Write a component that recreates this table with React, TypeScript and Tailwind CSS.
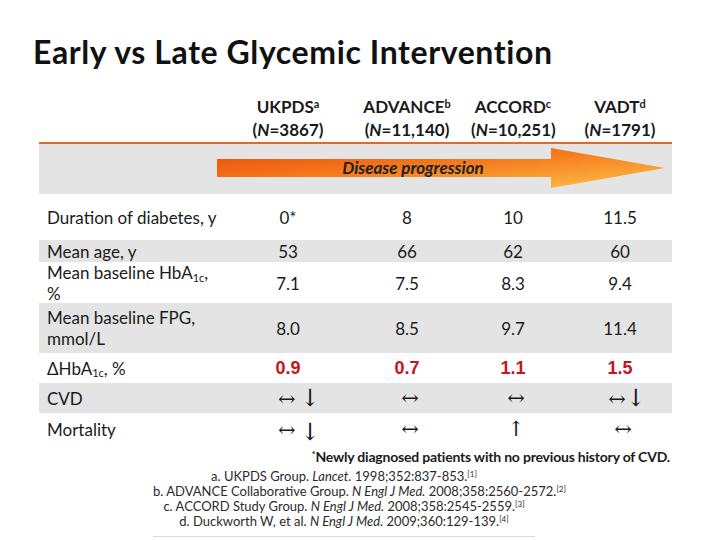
import React from "react";

const cols = "grid grid-cols-[194px_110px_128px_84px_117px] items-center";

type Row = {
  label: React.ReactNode;
  values: React.ReactNode[];
  h: string;
  gray?: boolean;
};

const arrowCls = "font-['DejaVu_Serif',serif] text-[21px] leading-none";
const downCls = "font-['DejaVu_Serif',serif] text-[24px] leading-none";

const rows: Row[] = [
  { label: "Duration of diabetes, y", values: ["0*", "8", "10", "11.5"], h: "h-[46px]" },
  { label: "Mean age, y", values: ["53", "66", "62", "60"], h: "h-[22px]", gray: true },
  {
    label: (
      <>
        Mean baseline HbA<sub className="text-[11px] leading-none">1c</sub>,
        <br />%
      </>
    ),
    values: ["7.1", "7.5", "8.3", "9.4"],
    h: "h-[41px]",
  },
  {
    label: (
      <>
        Mean baseline FPG,
        <br />
        mmol/L
      </>
    ),
    values: ["8.0", "8.5", "9.7", "11.4"],
    h: "h-[50px]",
    gray: true,
  },
  {
    label: (
      <>
        ΔHbA<sub className="text-[11px] leading-none">1c</sub>, %
      </>
    ),
    values: ["0.9", "0.7", "1.1", "1.5"].map((v) => (
      <span key={v} className="font-['Liberation_Sans',sans-serif] text-[18px] font-bold text-[#c8141c]">
        {v}
      </span>
    )),
    h: "h-[30px]",
  },
  {
    label: "CVD",
    values: [
      <span key="a" className="pl-[22px]"><span className={arrowCls}>↔</span> <span className={downCls}>↓</span></span>,
      <span key="b" className={`${arrowCls} pl-[6px]`}>↔</span>,
      <span key="c" className={`${arrowCls} pl-[6px]`}>↔</span>,
      <span key="d" className="pl-[14px]"><span className={arrowCls}>↔</span><span className={downCls}>↓</span></span>,
    ],
    h: "h-[30px]",
    gray: true,
  },
  {
    label: "Mortality",
    values: [
      <span key="a" className="pl-[22px]"><span className={arrowCls}>↔</span> <span className={`${downCls} relative top-[3px]`}>↓</span></span>,
      <span key="b" className={`${arrowCls} pl-[6px]`}>↔</span>,
      <span key="c" className={`${arrowCls} pl-[6px]`}>↑</span>,
      <span key="d" className={`${arrowCls} pl-[6px]`}>↔</span>,
    ],
    h: "h-[32px]",
  },
];

const studies = [
  { name: "UKPDS", sup: "a", n: "3867" },
  { name: "ADVANCE", sup: "b", n: "11,140" },
  { name: "ACCORD", sup: "c", n: "10,251" },
  { name: "VADT", sup: "d", n: "1791" },
];

const refs = [
  { pre: "a. UKPDS Group. ", j: "Lancet.", post: " 1998;352:837-853.", n: "1" },
  { pre: "b. ADVANCE Collaborative Group. ", j: "N Engl J Med.", post: " 2008;358:2560-2572.", n: "2" },
  { pre: "c. ACCORD Study Group. ", j: "N Engl J Med.", post: " 2008;358:2545-2559.", n: "3" },
  { pre: "d. Duckworth W, et al. ", j: "N Engl J Med.", post: " 2009;360:129-139.", n: "4" },
];

export default function App() {
  return (
    <div className="w-[720px] h-[540px] overflow-hidden bg-white text-[#1a1a1a] font-['Lato',sans-serif]">
      <h1 className="pt-[33px] pl-[33px] text-[32px] leading-[38px] font-bold tracking-[0.6px] text-[#111]">
        Early vs Late Glycemic Intervention
      </h1>

      <div className="ml-[39px] w-[633px]">
        {/* study header */}
        <div className={`${cols} mt-[24px] border-b-2 border-[#dd6b2a] pb-[1px] text-[17px] font-bold leading-[23px]`}>
          <div />
          {studies.map((s, i) => (
            <div key={s.name} className={`text-center ${i === 3 ? "pl-[13px]" : ""}`}>
              <div>
                {s.name}
                <sup className="text-[11px]">{s.sup}</sup>
              </div>
              <div>
                (<i>N</i>={s.n})
              </div>
            </div>
          ))}
        </div>

        {/* progression band */}
        <div className="relative h-[50px] bg-[#e4e4e4]">
          <svg width="633" height="50" className="block">
            <defs>
              <linearGradient id="prog" x1="0" y1="0" x2="1" y2="1">
                <stop offset="0" stopColor="#ea4a0c" />
                <stop offset="0.45" stopColor="#f47a1c" />
                <stop offset="0.8" stopColor="#fba83a" />
                <stop offset="1" stopColor="#fdc85c" />
              </linearGradient>
            </defs>
            <path d="M178 15 L512 15 L512 4 L626 24 L512 44 L512 33 L178 33 Z" fill="url(#prog)" />
          </svg>
          <span className="absolute left-[274px] top-[14px] w-[200px] text-center text-[17px] leading-[20px] font-bold italic text-[#222]">
            Disease progression
          </span>
        </div>

        {/* data rows */}
        {rows.map((r, idx) => (
          <div key={idx} className={`${cols} ${r.h} ${r.gray ? "bg-[#e4e4e4]" : ""} text-[17px] leading-[21px]`}>
            <div className="pl-[8px]">{r.label}</div>
            {r.values.map((v, i) => (
              <div key={i} className={`text-center ${i === 3 ? "pl-[13px]" : ""}`}>
                {v}
              </div>
            ))}
          </div>
        ))}

        <p className="mt-[2px] h-[20px] pr-[2px] text-right text-[14px] leading-[20px] font-bold tracking-[-0.2px] text-[#1a1a1a]">
          <sup className="text-[9px]">*</sup>Newly diagnosed patients with no previous history of CVD.
        </p>
      </div>

      <div className="ml-[153px] mt-[2px] w-[382px] border-b border-[#dcdcdc] pb-[7px] text-center text-[13px] leading-[15px] text-[#2b2b2b] whitespace-nowrap">
        {refs.map((r) => (
          <div key={r.n}>
            {r.pre}
            <i>{r.j}</i>
            {r.post}
            <sup className="text-[8px]">[{r.n}]</sup>
          </div>
        ))}
      </div>
    </div>
  );
}
